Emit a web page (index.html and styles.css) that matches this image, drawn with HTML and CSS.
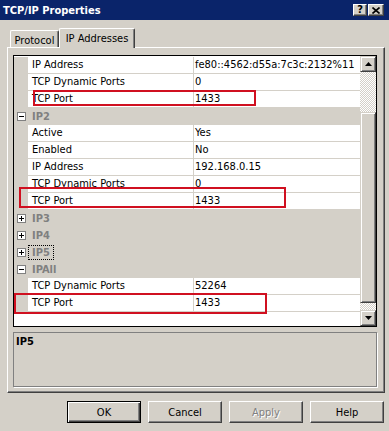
FILE: index.html
```html
<!DOCTYPE html>
<html>
<head>
<meta charset="utf-8">
<link rel="stylesheet" href="styles.css">
</head>
<body>
<div class="window">
  <div class="titlebar">
    <span class="title">TCP/IP Properties</span>
    <div class="tbtns">
      <span class="tbtn">?</span>
      <span class="tbtn close"><svg width="8" height="7" viewBox="0 0 8 7"><path d="M0.5 0.5l7 6M7.5 0.5l-7 6" stroke="#000" stroke-width="1.6"/></svg></span>
    </div>
  </div>
  <div class="tabs">
    <div class="tab">Protocol</div>
    <div class="tab active">IP Addresses</div>
  </div>
  <div class="panel">
    <div class="grid">
      <div class="rows">
        <div class="row"><span class="mcol"></span><span class="name">IP Address</span><span class="value">fe80::4562:d55a:7c3c:2132%11</span></div>
        <div class="row"><span class="mcol"></span><span class="name">TCP Dynamic Ports</span><span class="value">0</span></div>
        <div class="row"><span class="mcol"></span><span class="name">TCP Port</span><span class="value">1433</span></div>
        <div class="row group"><span class="mcol"><svg width="9" height="9" viewBox="0 0 9 9"><rect x="0.5" y="0.5" width="8" height="8" fill="#fff" stroke="#808080"/><path d="M2 4.5h5" stroke="#000"/></svg></span><span class="gname">IP2</span></div>
        <div class="row"><span class="mcol"></span><span class="name">Active</span><span class="value">Yes</span></div>
        <div class="row"><span class="mcol"></span><span class="name">Enabled</span><span class="value">No</span></div>
        <div class="row"><span class="mcol"></span><span class="name">IP Address</span><span class="value">192.168.0.15</span></div>
        <div class="row"><span class="mcol"></span><span class="name">TCP Dynamic Ports</span><span class="value">0</span></div>
        <div class="row"><span class="mcol"></span><span class="name">TCP Port</span><span class="value">1433</span></div>
        <div class="row group"><span class="mcol"><svg width="9" height="9" viewBox="0 0 9 9"><rect x="0.5" y="0.5" width="8" height="8" fill="#fff" stroke="#808080"/><path d="M2 4.5h5M4.5 2v5" stroke="#000"/></svg></span><span class="gname">IP3</span></div>
        <div class="row group"><span class="mcol"><svg width="9" height="9" viewBox="0 0 9 9"><rect x="0.5" y="0.5" width="8" height="8" fill="#fff" stroke="#808080"/><path d="M2 4.5h5M4.5 2v5" stroke="#000"/></svg></span><span class="gname">IP4</span></div>
        <div class="row group"><span class="mcol"><svg width="9" height="9" viewBox="0 0 9 9"><rect x="0.5" y="0.5" width="8" height="8" fill="#fff" stroke="#808080"/><path d="M2 4.5h5M4.5 2v5" stroke="#000"/></svg></span><span class="gname focus">IP5</span></div>
        <div class="row group"><span class="mcol"><svg width="9" height="9" viewBox="0 0 9 9"><rect x="0.5" y="0.5" width="8" height="8" fill="#fff" stroke="#808080"/><path d="M2 4.5h5" stroke="#000"/></svg></span><span class="gname">IPAll</span></div>
        <div class="row"><span class="mcol"></span><span class="name">TCP Dynamic Ports</span><span class="value">52264</span></div>
        <div class="row"><span class="mcol"></span><span class="name">TCP Port</span><span class="value">1433</span></div>
      </div>
      <div class="scrollbar">
        <span class="sbtn"><svg width="7" height="4" viewBox="0 0 7 4"><path d="M3.5 0L7 4H0z" fill="#000"/></svg></span>
        <span class="thumb"></span>
        <span class="sbtn down"><svg width="7" height="4" viewBox="0 0 7 4"><path d="M0 0h7L3.5 4z" fill="#000"/></svg></span>
      </div>
    </div>
    <div class="desc">IP5</div>
  </div>
  <div class="buttons">
    <span class="btn default">OK</span>
    <span class="btn">Cancel</span>
    <span class="btn disabled">Apply</span>
    <span class="btn">Help</span>
  </div>
  <div class="mark m1"></div>
  <div class="mark m2"></div>
  <div class="mark m3"></div>
</div>
</body>
</html>
```
FILE: styles.css
```css
* { box-sizing: border-box; }
html, body { margin: 0; padding: 0; }
body {
  width: 389px;
  height: 431px;
  overflow: hidden;
  background: #d4d0c8;
  font-family: "DejaVu Sans Condensed", "DejaVu Sans", sans-serif;
  font-stretch: condensed;
  font-size: 11px;
  color: #000;
}
.window {
  position: relative;
  width: 389px;
  height: 431px;
  background: #d4d0c8;
}
.titlebar {
  height: 20px;
  background: #0a246a;
  color: #fff;
  display: flex;
  align-items: center;
  justify-content: space-between;
  padding: 0 5px 0 3px;
}
.title {
  font-weight: bold;
  line-height: 20px;
  padding-top: 2px;
}
.tbtns {
  display: flex;
  gap: 1px;
}
.tbtn {
  width: 14px;
  height: 12px;
  background: #d4d0c8;
  border: 1px solid;
  border-color: #fff #404040 #404040 #fff;
  box-shadow: inset -1px -1px #808080;
  display: flex;
  align-items: center;
  justify-content: center;
  color: #000;
  font-weight: bold;
  font-size: 11px;
  line-height: 10px;
}
.tbtn.close { width: 16px; }
.tabs {
  display: flex;
  align-items: flex-end;
  height: 27px;
  padding-left: 10px;
  position: relative;
  z-index: 1;
}
.tab {
  height: 17px;
  width: 49px;
  text-align: center;
  padding-top: 3px;
  line-height: 13px;
  border-top: 1px solid #fff;
  border-left: 1px solid #fff;
  border-right: 1px solid #404040;
  box-shadow: inset -1px 0 #808080;
  border-radius: 2px 2px 0 0;
  background: #d4d0c8;
}
.tab.active {
  width: 76px;
  height: 20px;
  margin-bottom: -1px;
  padding-top: 3px;
}
.panel {
  margin-left: 7px;
  width: 378px;
  height: 346px;
  border: 1px solid;
  border-color: #fff #404040 #404040 #fff;
  box-shadow: inset -1px -1px #808080;
  padding: 7px 0 0 5px;
}
.grid {
  width: 364px;
  height: 272px;
  border: 1px solid #000;
  background: #fff;
  display: flex;
}
.rows {
  flex: 1;
  padding-top: 1px;
  overflow: hidden;
}
.row {
  display: flex;
  height: 17px;
}
.mcol {
  width: 14px;
  flex: none;
  background: #d4d0c8;
  display: flex;
  align-items: center;
  justify-content: center;
}
.name {
  width: 166px;
  flex: none;
  border-right: 1px solid #d4d0c8;
  border-bottom: 1px solid #d4d0c8;
  padding-left: 4px;
  line-height: 16px;
  white-space: nowrap;
}
.value {
  flex: 1;
  border-bottom: 1px solid #d4d0c8;
  padding-left: 1px;
  line-height: 16px;
  white-space: nowrap;
  overflow: hidden;
}
.row.group { background: #d4d0c8; }
.gname {
  align-self: center;
  border: 1px dotted transparent;
  padding: 0 3px;
  line-height: 13px;
  font-weight: bold;
  color: #808080;
}
.gname.focus { border-color: #000; }
.scrollbar {
  width: 16px;
  flex: none;
  display: flex;
  flex-direction: column;
  background: repeating-conic-gradient(#d4d0c8 0 25%, #fff 0 50%) 0 0 / 2px 2px;
}
.sbtn, .thumb {
  background: #d4d0c8;
  border: 1px solid;
  border-color: #d4d0c8 #404040 #404040 #d4d0c8;
  box-shadow: inset 1px 1px #fff, inset -1px -1px #808080;
}
.sbtn {
  height: 16px;
  display: flex;
  align-items: center;
  justify-content: center;
}
.thumb {
  height: 191px;
  margin-top: 40px;
}
.sbtn.down { margin-top: auto; }
.desc {
  width: 364px;
  height: 55px;
  margin-top: 5px;
  border: 1px solid #808080;
  box-shadow: 1px 1px 0 #fff;
  padding: 2px 2px;
  line-height: 13px;
  font-weight: bold;
}
.buttons {
  display: flex;
  justify-content: flex-end;
  gap: 7px;
  padding-right: 5px;
  margin-top: 8px;
}
.btn {
  width: 74px;
  height: 22px;
  background: #d4d0c8;
  border: 1px solid;
  border-color: #fff #404040 #404040 #fff;
  box-shadow: inset -1px -1px #808080;
  display: flex;
  align-items: center;
  justify-content: center;
}
.btn.default {
  border-color: #000;
  box-shadow: inset 1px 1px #fff, inset -1px -1px #404040, inset -2px -2px #808080;
}
.btn.disabled {
  color: #808080;
  text-shadow: 1px 1px 0 #fff;
}
.mark {
  position: absolute;
  border: 2px solid #d01020;
}
.m1 { left: 33px; top: 90px; width: 223px; height: 16px; }
.m2 { left: 19px; top: 187px; width: 267px; height: 21px; }
.m3 { left: 14px; top: 293px; width: 253px; height: 21px; }
```
